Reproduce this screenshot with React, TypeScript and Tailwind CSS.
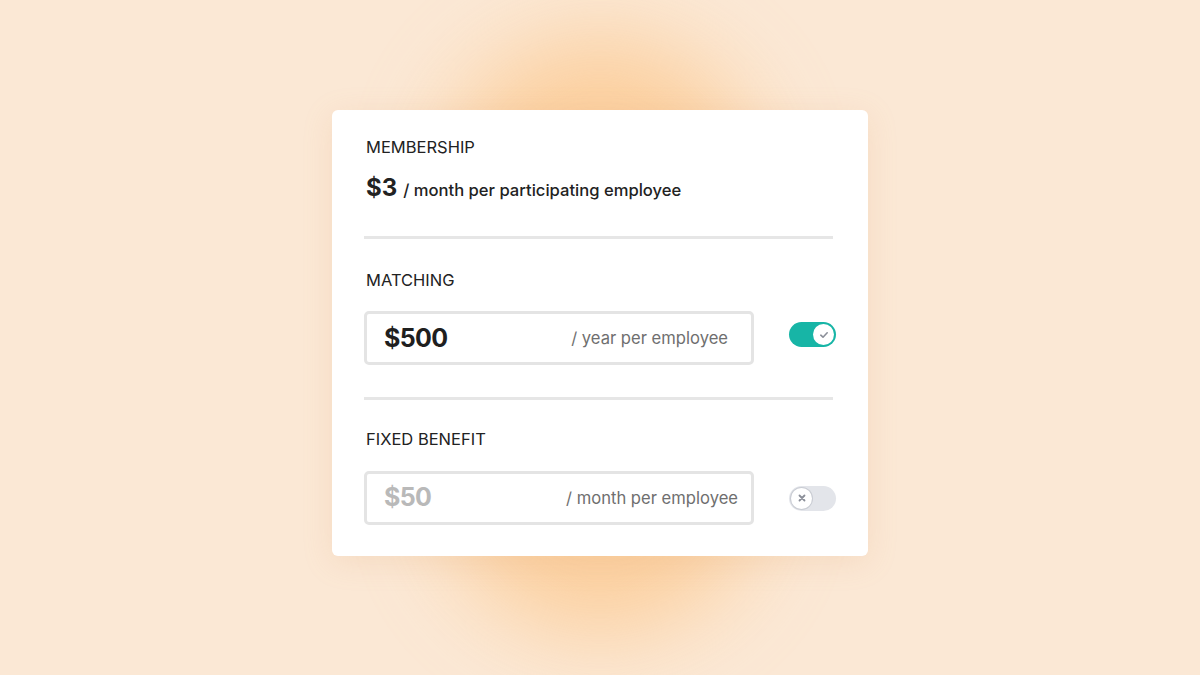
import React from "react";

const Toggle = ({ on }: { on: boolean }) => {
  return (
    <div
      className={`flex h-[25px] w-[47px] items-center rounded-full p-[2px] ${
        on ? "justify-end bg-[#17b5a6]" : "justify-start bg-[#e3e5ea]"
      }`}
    >
      <div
        className={`flex h-[21px] w-[21px] items-center justify-center rounded-full bg-white ${
          on ? "" : "ring-1 ring-[#c9ccd3]"
        }`}
      >
        {on ? (
          <svg width="10" height="10" viewBox="0 0 10 10" fill="none">
            <path
              d="M1.8 5.2 L4 7.2 L8.2 2.8"
              stroke="#8b8f99"
              strokeWidth="1.6"
              strokeLinecap="round"
              strokeLinejoin="round"
            />
          </svg>
        ) : (
          <svg width="8" height="8" viewBox="0 0 8 8" fill="none">
            <path
              d="M1.5 1.5 L6.5 6.5 M6.5 1.5 L1.5 6.5"
              stroke="#8b8f99"
              strokeWidth="1.8"
              strokeLinecap="round"
            />
          </svg>
        )}
      </div>
    </div>
  );
};

const AmountRow = ({
  amount,
  suffix,
  on,
  pr,
}: {
  amount: string;
  suffix: string;
  on: boolean;
  pr: string;
}) => {
  return (
    <div className="flex items-center justify-between">
      <div
        className={`flex h-[54px] w-[390px] items-center justify-between rounded-[5px] border-[3px] border-[#e4e4e4] pl-[17px] ${pr}`}
      >
        <span
          className={`text-[25px] font-bold tracking-tight ${
            on ? "text-[#1f1f1f]" : "text-[#b9b9b9]"
          }`}
        >
          {amount}
        </span>
        <span className="text-[16.6px] text-[#6f6f6f]">{suffix}</span>
      </div>
      <div className={on ? "mb-[7px]" : ""}>
        <Toggle on={on} />
      </div>
    </div>
  );
};

export default function App() {
  return (
    <div
      className="relative flex h-[675px] w-[1200px] items-center justify-center overflow-hidden bg-[#fbe8d5]"
      style={{ fontFamily: "Inter, 'Liberation Sans', sans-serif" }}
    >
      {/* orange glow behind card */}
      <div className="pointer-events-none absolute left-[440px] top-[35px] h-[600px] w-[320px] rounded-full bg-[#fcc990] opacity-80 blur-[45px]"></div>

      <div className="relative mb-[9px] w-[536px] rounded-[6px] bg-white px-[32px] pb-[31px] pt-[25px] shadow-[0_6px_30px_rgba(220,160,110,0.18)]">
        <div className="px-[2px] text-[16.5px] text-[#222]">MEMBERSHIP</div>
        <div className="mt-[10px] flex items-baseline px-[2px] text-[#222]">
          <span className="text-[24px] font-bold">$3</span>
          <span className="ml-[6px] text-[16.6px] font-medium">
            / month per participating employee
          </span>
        </div>

        <div className="mt-[30px] h-[3px] w-[469px] bg-[#e6e6e6]"></div>

        <div className="mt-[29px] px-[2px] text-[16.5px] text-[#222]">MATCHING</div>
        <div className="mt-[19px]">
          <AmountRow amount="$500" suffix="/ year per employee" on={true} pr="pr-[23px]" />
        </div>

        <div className="mt-[32px] h-[3px] w-[469px] bg-[#e6e6e6]"></div>

        <div className="mt-[27px] px-[2px] text-[16.5px] text-[#222]">FIXED BENEFIT</div>
        <div className="mt-[19px]">
          <AmountRow amount="$50" suffix="/ month per employee" on={false} pr="pr-[13px]" />
        </div>
      </div>
    </div>
  );
}
